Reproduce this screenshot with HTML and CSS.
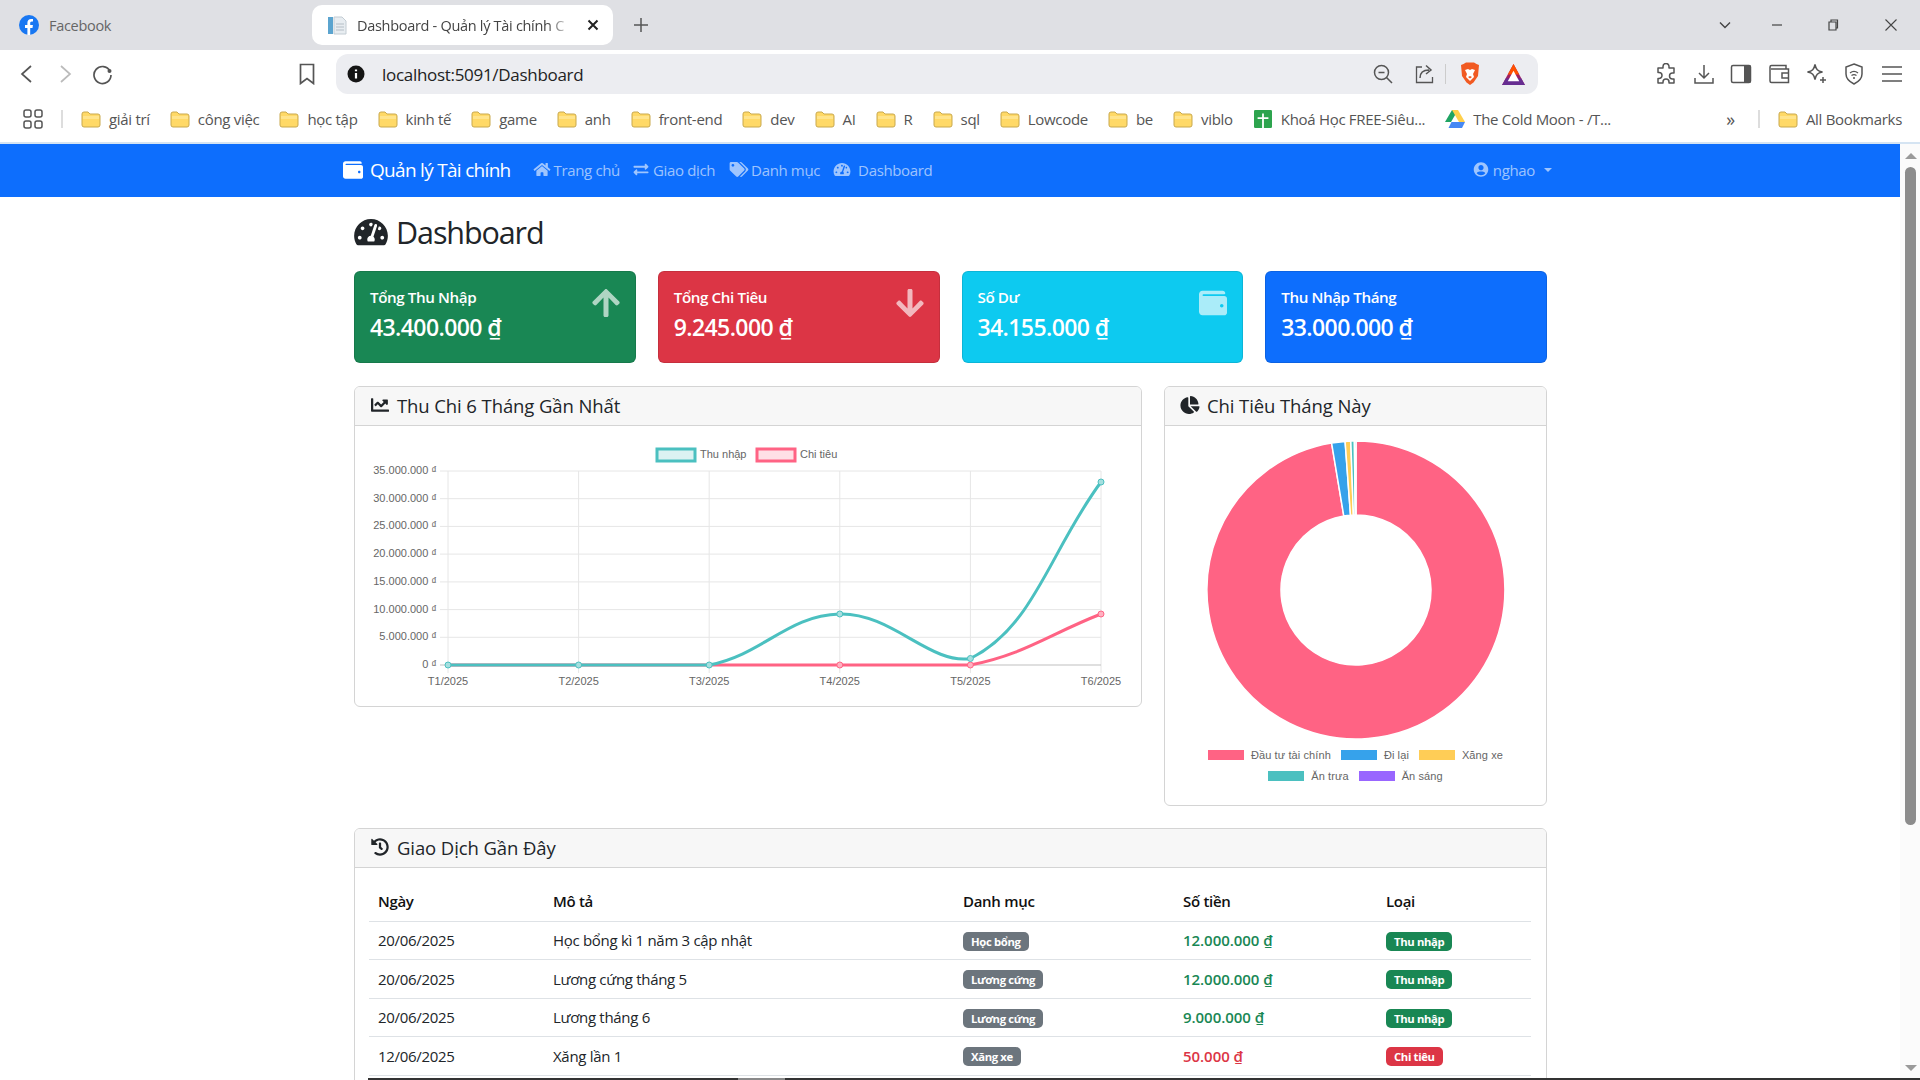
FILE: index.html
```html
<!DOCTYPE html>
<html lang="vi">
<head>
  <meta charset="UTF-8">
  <title>Dashboard - Quản lý Tài chính</title>
  <link rel="stylesheet" href="styles.css">
</head>
<body>

  <svg class="defs" width="0" height="0">
    <symbol id="i-gauge" viewBox="0 0 576 512"><path d="M288 32C128.94 32 0 160.94 0 320c0 52.8 14.25 102.26 39.06 144.8 5.61 9.62 16.3 15.2 27.44 15.2h443c11.14 0 21.83-5.58 27.44-15.2C561.75 422.26 576 372.8 576 320c0-159.06-128.94-288-288-288zm0 64c14.71 0 26.58 10.13 30.32 23.65-1.11 2.26-2.64 4.23-3.45 6.67l-9.22 27.67c-5.13 3.49-10.97 6.01-17.64 6.01-17.67 0-32-14.33-32-32S270.33 96 288 96zM96 384c-17.67 0-32-14.33-32-32s14.33-32 32-32 32 14.33 32 32-14.33 32-32 32zm48-160c-17.67 0-32-14.33-32-32s14.33-32 32-32 32 14.33 32 32-14.33 32-32 32zm246.77-72.41l-61.33 184C343.13 347.33 352 364.54 352 384c0 11.72-3.38 22.55-8.88 32H232.88c-5.5-9.45-8.88-20.28-8.88-32 0-33.94 26.5-61.43 59.9-63.59l61.34-184.01c4.17-12.56 17.73-19.45 30.36-15.17 12.57 4.19 19.35 17.79 15.17 30.36zm14.66 57.2l15.52-46.55c3.47-1.29 7.13-2.23 11.05-2.23 17.67 0 32 14.33 32 32s-14.33 32-32 32c-11.38-.01-20.89-6.28-26.57-15.22zM480 384c-17.67 0-32-14.33-32-32s14.33-32 32-32 32 14.33 32 32-14.33 32-32 32z"/></symbol>
    <symbol id="i-home" viewBox="0 0 576 512"><path d="M280.37 148.26L96 300.11V464a16 16 0 0 0 16 16l112.06-.29a16 16 0 0 0 15.92-16V368a16 16 0 0 1 16-16h64a16 16 0 0 1 16 16v95.64a16 16 0 0 0 16 16.05L464 480a16 16 0 0 0 16-16V300L295.67 148.26a12.19 12.19 0 0 0-15.3 0zM571.6 251.47L488 182.56V44.05a12 12 0 0 0-12-12h-56a12 12 0 0 0-12 12v72.61L318.47 43a48 48 0 0 0-61 0L4.34 251.47a12 12 0 0 0-1.6 16.9l25.5 31A12 12 0 0 0 45.15 301l235.22-193.74a12.19 12.19 0 0 1 15.3 0L530.9 301a12 12 0 0 0 16.9-1.6l25.5-31a12 12 0 0 0-1.7-16.93z"/></symbol>
    <symbol id="i-exchange" viewBox="0 0 512 512"><path d="M0 168v-16c0-13.255 10.745-24 24-24h360V80c0-21.367 25.899-32.042 40.971-16.971l80 80c9.372 9.373 9.372 24.569 0 33.941l-80 80C409.956 271.982 384 261.456 384 240v-48H24c-13.255 0-24-10.745-24-24zm488 152H128v-48c0-21.314-25.862-32.08-40.971-16.971l-80 80c-9.372 9.373-9.372 24.569 0 33.941l80 80C102.057 463.997 128 453.437 128 432v-48h360c13.255 0 24-10.745 24-24v-16c0-13.255-10.745-24-24-24z"/></symbol>
    <symbol id="i-tags" viewBox="0 0 640 512"><path d="M497.941 225.941L286.059 14.059A48 48 0 0 0 252.118 0H48C21.49 0 0 21.49 0 48v204.118a48 48 0 0 0 14.059 33.941l211.882 211.882c18.744 18.745 49.136 18.746 67.882 0l204.118-204.118c18.745-18.745 18.745-49.137 0-67.882zM112 160c-26.51 0-48-21.49-48-48s21.49-48 48-48 48 21.49 48 48-21.49 48-48 48zm513.941 133.823L421.823 497.941c-18.745 18.745-49.137 18.745-67.882 0l-.36-.36L527.64 323.522c16.999-16.999 26.36-39.6 26.36-63.64s-9.362-46.641-26.36-63.64L331.397 0h48.721a48 48 0 0 1 33.941 14.059l211.882 211.882c18.745 18.745 18.745 49.137 0 67.882z"/></symbol>
    <symbol id="i-wallet" viewBox="0 0 512 512"><path d="M461.2 128H80c-8.84 0-16-7.16-16-16s7.16-16 16-16h384c8.84 0 16-7.16 16-16 0-26.51-21.49-48-48-48H64C28.65 32 0 60.65 0 96v320c0 35.35 28.65 64 64 64h397.2c28.02 0 50.8-21.53 50.8-48V176c0-26.47-22.78-48-50.8-48zM416 336c-17.67 0-32-14.33-32-32s14.33-32 32-32 32 14.33 32 32-14.33 32-32 32z"/></symbol>
    <symbol id="i-up" viewBox="0 0 448 512"><path d="M34.9 289.5l-22.2-22.2c-9.4-9.4-9.4-24.6 0-33.9L207 39c9.4-9.4 24.6-9.4 33.9 0l194.3 194.3c9.4 9.4 9.4 24.6 0 33.9L413 289.4c-9.5 9.5-25 9.3-34.3-.4L264 168.6V456c0 13.3-10.7 24-24 24h-32c-13.3 0-24-10.7-24-24V168.6L69.2 289.1c-9.3 9.8-24.8 10-34.3.4z"/></symbol>
    <symbol id="i-down" viewBox="0 0 448 512"><path d="M413.1 222.5l22.2 22.2c9.4 9.4 9.4 24.6 0 33.9L241 473c-9.4 9.4-24.6 9.4-33.9 0L12.7 278.6c-9.4-9.4-9.4-24.6 0-33.9l22.2-22.2c9.5-9.5 25-9.3 34.3.4L184 343.4V56c0-13.3 10.7-24 24-24h32c13.3 0 24 10.7 24 24v287.4l114.8-120.5c9.3-9.8 24.8-10 34.3-.4z"/></symbol>
    <symbol id="i-line" viewBox="0 0 512 512"><path d="M496 384H64V80c0-8.84-7.16-16-16-16H16C7.16 64 0 71.16 0 80v336c0 17.67 14.33 32 32 32h464c8.84 0 16-7.16 16-16v-32c0-8.84-7.16-16-16-16zM464 96H345.94c-21.38 0-32.09 25.85-16.97 40.97l32.4 32.4L288 242.75l-73.37-73.37c-12.5-12.5-32.76-12.5-45.25 0l-68.69 68.69c-6.25 6.25-6.25 16.38 0 22.63l22.62 22.62c6.25 6.25 16.38 6.25 22.63 0L192 237.25l73.37 73.37c12.5 12.5 32.76 12.5 45.25 0l96-96 32.4 32.4c15.12 15.12 40.97 4.41 40.97-16.97V112c.01-8.84-7.15-16-15.99-16z"/></symbol>
    <symbol id="i-pie" viewBox="0 0 544 512"><path d="M527.79 288H290.5l158.03 158.03c6.04 6.04 15.98 6.53 22.19.68 38.7-36.46 65.32-85.61 73.13-140.86 1.34-9.46-6.51-17.85-16.06-17.85zm-15.83-64.8C503.72 103.74 408.26 8.28 288.8.04 279.68-.59 272 7.1 272 16.24V240h223.77c9.14 0 16.82-7.68 16.19-16.8zM224 288V50.71c0-9.55-8.39-17.4-17.84-16.06C86.99 51.49-4.1 155.6.14 280.37 4.5 408.51 114.83 513.59 243.03 511.98c50.4-.63 96.97-16.87 135.26-44.03 7.9-5.6 8.42-17.23 1.57-24.08L224 288z"/></symbol>
    <symbol id="i-history" viewBox="0 0 512 512"><path d="M504 255.531c.253 136.64-111.18 248.372-247.82 248.468-59.015.042-113.223-20.53-155.822-54.911-11.077-8.94-11.905-25.541-1.839-35.607l11.267-11.267c8.609-8.609 22.353-9.551 31.891-1.984C173.062 425.135 212.781 440 256 440c101.705 0 184-82.311 184-184 0-101.705-82.311-184-184-184-48.814 0-93.149 18.969-126.068 49.932l50.754 50.754c10.08 10.08 2.941 27.314-11.313 27.314H24c-8.837 0-16-7.163-16-16V38.627c0-14.254 17.234-21.393 27.314-11.314l49.372 49.372C129.209 34.136 189.552 8 256 8c136.81 0 247.747 110.78 248 247.531zm-180.912 78.784l9.823-12.63c8.138-10.463 6.253-25.542-4.21-33.679L288 256.349V152c0-13.255-10.745-24-24-24h-16c-13.255 0-24 10.745-24 24v135.651l65.409 50.874c10.463 8.137 25.541 6.253 33.679-4.21z"/></symbol>
    <symbol id="i-user" viewBox="0 0 496 512"><path d="M248 8C111 8 0 119 0 256s111 248 248 248 248-111 248-248S385 8 248 8zm0 96c48.6 0 88 39.4 88 88s-39.4 88-88 88-88-39.4-88-88 39.4-88 88-88zm0 344c-58.7 0-111.3-26.6-146.5-68.2 18.8-35.4 55.6-59.8 98.5-59.8 2.4 0 4.8.4 7.1 1.1 13 4.2 26.6 6.9 40.9 6.9 14.3 0 28-2.7 40.9-6.9 2.3-.7 4.7-1.1 7.1-1.1 42.9 0 79.7 24.4 98.5 59.8C359.3 421.4 306.7 448 248 448z"/></symbol>
    <symbol id="i-folder" viewBox="0 0 20 18">
      <path d="M1 4a2 2 0 0 1 2-2h4l2 2h8a2 2 0 0 1 2 2v9a2 2 0 0 1-2 2H3a2 2 0 0 1-2-2z" fill="#ffd967" stroke="#c9a94f" stroke-width="1"/>
      <path d="M2 6h16v3H2z" fill="#ffe48c"/>
    </symbol>
  </svg>

  <!-- thanh tab -->
  <div class="tabstrip">
    <div class="tab">
      <svg class="favicon" viewBox="0 0 20 20"><circle cx="10" cy="10" r="10" fill="#1877f2"/><path d="M8.4 20v-7H6v-3h2.4V7.8c0-2.5 1.5-3.9 3.7-3.9 1 0 1.9.2 1.9.2v2.5h-1.200c-1.200 0-1.600.8-1.600 1.500V10h2.700l-.4 3h-2.300v7z" fill="#fff"/></svg>
      <span>Facebook</span>
    </div>
    <div class="tab tab-active">
      <svg class="favicon" viewBox="0 0 20 20"><rect x="1" y="2" width="5" height="17" fill="#5ba4cf"/><path d="M7 2h8l4 4v13H7z" fill="#e8edf1" stroke="#c3ccd3"/><path d="M9 9h8M9 12h8M9 15h8" stroke="#b5bec6"/></svg>
      <span class="tab-title">Dashboard - Quản lý Tài chính C</span>
      <svg class="tab-close" viewBox="0 0 12 12"><path d="M1.500 1.500l9 9M10.500 1.500l-9 9" stroke="#222" stroke-width="2"/></svg>
    </div>
    <svg class="tab-new" viewBox="0 0 14 14"><path d="M7 0v14M0 7h14" stroke="#555" stroke-width="1.500"/></svg>
    <div class="window-btns">
      <svg viewBox="0 0 14 14"><path d="M2 4.500l5 5 5-5" fill="none" stroke="#444" stroke-width="1.400"/></svg>
      <svg viewBox="0 0 14 14"><path d="M2 7h10" stroke="#444" stroke-width="1.200"/></svg>
      <svg viewBox="0 0 14 14"><path d="M3 4h7v8H3zM5 4V2h6.500v8H10" fill="none" stroke="#444" stroke-width="1.200"/></svg>
      <svg viewBox="0 0 14 14"><path d="M1.500 1.500l11 11M12.500 1.500l-11 11" stroke="#444" stroke-width="1.100"/></svg>
    </div>
  </div>

  <!-- thanh dia chi -->
  <div class="toolbar">
    <svg class="tool back" viewBox="0 0 20 20"><path d="M14 2l-9 8 9 8" fill="none" stroke="#555" stroke-width="1.700"/></svg>
    <svg class="tool forward" viewBox="0 0 20 20"><path d="M6 2l9 8-9 8" fill="none" stroke="#bbb" stroke-width="1.700"/></svg>
    <svg class="tool reload" viewBox="0 0 22 22"><path d="M18 8a8.500 8.500 0 1 0 1 4" fill="none" stroke="#555" stroke-width="1.700"/><circle cx="17.500" cy="8" r="2" fill="#555"/></svg>
    <svg class="tool bookmark" viewBox="0 0 20 22"><path d="M3.500 1.500h13v19L10 15.500 3.500 20.500z" fill="none" stroke="#555" stroke-width="1.700"/></svg>
    <div class="address">
      <svg class="info" viewBox="0 0 18 18"><circle cx="9" cy="9" r="8.500" fill="#151515"/><path d="M9 8v5.500M9 4.500v1.800" stroke="#fff" stroke-width="2.200"/></svg>
      <span class="url">localhost:5091/Dashboard</span>
      <div class="address-icons">
        <svg class="ic-zoom" viewBox="0 0 20 20"><circle cx="8.500" cy="8.500" r="7" fill="none" stroke="#555" stroke-width="1.500"/><path d="M5.500 8.500h6M13.500 13.500l5.500 5.500" stroke="#555" stroke-width="1.500"/></svg>
        <svg class="ic-share" viewBox="0 0 20 20"><path d="M7 3H1.500v15.500h16V13" fill="none" stroke="#555" stroke-width="1.300"/><path d="M5 14c0-6 4-8 9-8M11 1.500l5 4.500-5 4" fill="none" stroke="#555" stroke-width="1.500"/></svg>
        <i class="address-sep"></i>
        <svg class="ic-brave" viewBox="0 0 20 24"><path d="M3.500 2L6 .5h8L16.500 2 19 3l-1 11-4.500 6.500L10 23l-3.500-2.500L2 14 1 3z" fill="#f15a22"/><path d="M5 8l3-1 2 1 2-1 3 1-2 4 1 3-4 4-4-4 1-3z" fill="#fff"/><path d="M8 15l2 1.500 2-1.500-2-1z" fill="#f15a22"/></svg>
        <svg class="ic-bat" viewBox="0 0 24 22"><path d="M12 0l12 22H0z" fill="#9e1f63"/><path d="M12 0l6 11H6z" fill="#ff5000"/><path d="M0 22l4-7h16l4 7z" fill="#662d91"/><path d="M12 7l6 11H6z" fill="#fff"/></svg>
      </div>
    </div>
    <div class="toolbar-right">
      <svg viewBox="0 0 22 22"><path d="M8 3.500a3 3 0 0 1 6 0V5h5v5h-1.500a3 3 0 0 0 0 6H19v4h-5v-1a3 3 0 0 0-6 0v1H3v-4.500h1a3 3 0 0 0 0-6H3V5h5z" fill="none" stroke="#555" stroke-width="1.500" stroke-linejoin="round"/></svg>
      <svg viewBox="0 0 22 22"><path d="M11 2v13M6 10l5 5 5-5M2 15v5h18v-5" fill="none" stroke="#555" stroke-width="1.500"/></svg>
      <svg viewBox="0 0 22 22"><rect x="1.500" y="2.500" width="19" height="17" rx="1.500" fill="none" stroke="#555" stroke-width="1.500"/><rect x="14" y="2.500" width="6.500" height="17" fill="#555"/></svg>
      <svg viewBox="0 0 22 22"><path d="M18 6V2.500H3.500A1.500 1.500 0 0 0 2 4v14a1.500 1.500 0 0 0 1.500 1.500h17V6H3M20.500 10H14v5h6.500" fill="none" stroke="#555" stroke-width="1.500"/></svg>
      <svg viewBox="0 0 22 22"><path d="M10 1.500c1 5 2.500 6.500 7.500 7.500-5 1-6.500 2.500-7.500 7.500C9 11.500 7.500 10 2.500 9c5-1 6.500-2.500 7.500-7.500zM18 14v6M15 17h6" fill="none" stroke="#555" stroke-width="1.500"/></svg>
      <svg viewBox="0 0 22 22"><path d="M11 1l8 3v7c0 5-4 8-8 10-4-2-8-5-8-10V4z" fill="none" stroke="#555" stroke-width="1.500"/><path d="M7 10c2.500-2 5.500-2 8 0M8.500 12.500c1.500-1 3.500-1 5 0" fill="none" stroke="#555" stroke-width="1.300"/><circle cx="11" cy="15" r="1" fill="#555"/></svg>
      <svg viewBox="0 0 22 22"><path d="M1 4h20M1 11h20M1 18h20" stroke="#555" stroke-width="1.500"/></svg>
    </div>
  </div>

  <!-- thanh bookmark -->
  <div class="bookmarks">
    <svg class="apps" viewBox="0 0 20 20"><rect x="1" y="1" width="7" height="7" rx="2" fill="none" stroke="#555" stroke-width="1.500"/><rect x="12" y="1" width="7" height="7" rx="2" fill="none" stroke="#555" stroke-width="1.500"/><rect x="1" y="12" width="7" height="7" rx="2" fill="none" stroke="#555" stroke-width="1.500"/><rect x="12" y="12" width="7" height="7" rx="2" fill="none" stroke="#555" stroke-width="1.500"/></svg>
    <i class="bm-sep"></i>
    <div class="bm"><svg class="bm-icon"><use href="#i-folder"/></svg>giải trí</div>
    <div class="bm"><svg class="bm-icon"><use href="#i-folder"/></svg>công việc</div>
    <div class="bm"><svg class="bm-icon"><use href="#i-folder"/></svg>học tập</div>
    <div class="bm"><svg class="bm-icon"><use href="#i-folder"/></svg>kinh tế</div>
    <div class="bm"><svg class="bm-icon"><use href="#i-folder"/></svg>game</div>
    <div class="bm"><svg class="bm-icon"><use href="#i-folder"/></svg>anh</div>
    <div class="bm"><svg class="bm-icon"><use href="#i-folder"/></svg>front-end</div>
    <div class="bm"><svg class="bm-icon"><use href="#i-folder"/></svg>dev</div>
    <div class="bm"><svg class="bm-icon"><use href="#i-folder"/></svg>AI</div>
    <div class="bm"><svg class="bm-icon"><use href="#i-folder"/></svg>R</div>
    <div class="bm"><svg class="bm-icon"><use href="#i-folder"/></svg>sql</div>
    <div class="bm"><svg class="bm-icon"><use href="#i-folder"/></svg>Lowcode</div>
    <div class="bm"><svg class="bm-icon"><use href="#i-folder"/></svg>be</div>
    <div class="bm"><svg class="bm-icon"><use href="#i-folder"/></svg>viblo</div>
    <div class="bm"><svg class="bm-icon" viewBox="0 0 20 20"><rect width="20" height="20" rx="1.500" fill="#2da44e"/><path d="M10 4v16M4 9h12" stroke="#fff" stroke-width="2"/></svg>Khoá Học FREE-Siêu...</div>
    <div class="bm"><svg class="bm-icon" viewBox="0 0 20 18"><path d="M7 0h6l-7 12H0z" fill="#1fa463"/><path d="M7 0h6l7 12h-6z" fill="#ffd04b"/><path d="M3.500 18L6.500 12H20l-3 6z" fill="#4688f4"/></svg>The Cold Moon - /T...</div>
    <div class="bm-end">
      <span class="bm-more">»</span>
      <i class="bm-sep"></i>
      <div class="bm"><svg class="bm-icon"><use href="#i-folder"/></svg>All Bookmarks</div>
    </div>
  </div>

  <div class="viewport">
    <div class="page">
      <nav class="navbar">
        <a class="brand"><svg class="ic"><use href="#i-wallet"/></svg>Quản lý Tài chính</a>
        <a class="nav-link nl-home"><svg class="ic"><use href="#i-home"/></svg>Trang chủ</a>
        <a class="nav-link nl-trans"><svg class="ic"><use href="#i-exchange"/></svg>Giao dịch</a>
        <a class="nav-link nl-cat"><svg class="ic"><use href="#i-tags"/></svg>Danh mục</a>
        <a class="nav-link nl-dash"><svg class="ic"><use href="#i-gauge"/></svg>Dashboard</a>
        <a class="nav-link nav-user"><svg class="ic"><use href="#i-user"/></svg>nghao<i class="caret"></i></a>
      </nav>

      <main class="content">
        <h1><svg class="ic"><use href="#i-gauge"/></svg>Dashboard</h1>

        <div class="stats">
          <div class="stat bg-green">
            <div><div class="stat-label">Tổng Thu Nhập</div><div class="stat-value">43.400.000 ₫</div></div>
            <svg class="stat-icon"><use href="#i-up"/></svg>
          </div>
          <div class="stat bg-red">
            <div><div class="stat-label">Tổng Chi Tiêu</div><div class="stat-value">9.245.000 ₫</div></div>
            <svg class="stat-icon"><use href="#i-down"/></svg>
          </div>
          <div class="stat bg-cyan">
            <div><div class="stat-label">Số Dư</div><div class="stat-value">34.155.000 ₫</div></div>
            <svg class="stat-icon"><use href="#i-wallet"/></svg>
          </div>
          <div class="stat bg-blue">
            <div><div class="stat-label">Thu Nhập Tháng</div><div class="stat-value">33.000.000 ₫</div></div>
          </div>
        </div>

        <div class="charts">
          <section class="card card-line">
            <header class="card-head"><svg class="ic"><use href="#i-line"/></svg>Thu Chi 6 Tháng Gần Nhất</header>
            <svg class="line-chart" viewBox="355 425 786 280" width="786" height="280">
              <g class="grid">
                <path d="M440 470H1101M440 497.700H1101M440 525.400H1101M440 553.100H1101M440 580.900H1101M440 608.600H1101M440 636.300H1101"/>
                <path d="M448 470V672M578.600 470V672M709.200 470V672M839.800 470V672M970.400 470V672M1101 470V672"/>
                <path class="zero" d="M440 664H1101"/>
              </g>
              <g class="y-ticks">
                <text x="437" y="473">35.000.000 ₫</text>
                <text x="437" y="500.700">30.000.000 ₫</text>
                <text x="437" y="528.400">25.000.000 ₫</text>
                <text x="437" y="556.100">20.000.000 ₫</text>
                <text x="437" y="583.900">15.000.000 ₫</text>
                <text x="437" y="611.600">10.000.000 ₫</text>
                <text x="437" y="639.300">5.000.000 ₫</text>
                <text x="437" y="667">0 ₫</text>
              </g>
              <g class="x-ticks">
                <text x="448" y="684">T1/2025</text>
                <text x="578.600" y="684">T2/2025</text>
                <text x="709.200" y="684">T3/2025</text>
                <text x="839.800" y="684">T4/2025</text>
                <text x="970.400" y="684">T5/2025</text>
                <text x="1101" y="684">T6/2025</text>
              </g>
              <rect class="lg-teal" x="657" y="448" width="38" height="12"/>
              <text class="lg-text" x="700" y="457">Thu nhập</text>
              <rect class="lg-pink" x="757" y="448" width="38" height="12"/>
              <text class="lg-text" x="800" y="457">Chi tiêu</text>
              <!-- chi tieu -->
              <path class="serie pink" d="M448 664L970.400 664C1024.500 653.400 1048.800 633.400 1101 613"/>
              <g class="dots pink-dots">
                <circle cx="839.800" cy="664" r="3"/><circle cx="970.400" cy="664" r="3"/><circle cx="1101" cy="613" r="3"/>
              </g>
              <!-- thu nhap -->
              <path class="serie teal" d="M448 664L709.200 664C763.300 653.400 787.100 614.300 839.800 613C891.600 611.700 930.100 664 970.400 657.500C1034.600 625.100 1048.800 551.600 1101 481"/>
              <g class="dots teal-dots">
                <circle cx="448" cy="664" r="3"/><circle cx="578.600" cy="664" r="3"/><circle cx="709.200" cy="664" r="3"/><circle cx="839.800" cy="613" r="3"/><circle cx="970.400" cy="657.500" r="3"/><circle cx="1101" cy="481" r="3"/>
              </g>
            </svg>
          </section>

          <section class="card card-pie">
            <header class="card-head"><svg class="ic"><use href="#i-pie"/></svg>Chi Tiêu Tháng Này</header>
            <div class="pie-body">
              <svg class="donut" viewBox="-150 -150 300 300" width="300" height="300">
                <path fill="#ff6384" d="M0 -149A149 149 0 1 1 -24.400 -147L-12.200 -74A75 75 0 1 0 0 -75Z"/>
                <path fill="#36a2eb" d="M-24.400 -147A149 149 0 0 1 -10.900 -148.600L-5.500 -74.800A75 75 0 0 0 -12.200 -74Z"/>
                <path fill="#ffcd56" d="M-10.900 -148.600A149 149 0 0 1 -5.200 -148.900L-2.600 -75A75 75 0 0 0 -5.500 -74.800Z"/>
                <path fill="#4bc0c0" d="M-5.200 -148.900A149 149 0 0 1 -1.600 -149L-.8 -75A75 75 0 0 0 -2.600 -75Z"/>
                <path fill="#9966ff" d="M-1.600 -149A149 149 0 0 1 0 -149L0 -75A75 75 0 0 0 -.8 -75Z"/>
              </svg>
              <div class="pie-legend">
                <span class="lg-item"><i class="sw sw-pink"></i>Đầu tư tài chính</span>
                <span class="lg-item"><i class="sw sw-blue"></i>Đi lại</span>
                <span class="lg-item"><i class="sw sw-yellow"></i>Xăng xe</span>
                <span class="lg-item"><i class="sw sw-teal"></i>Ăn trưa</span>
                <span class="lg-item"><i class="sw sw-purple"></i>Ăn sáng</span>
              </div>
            </div>
          </section>
        </div>

        <section class="card card-table">
          <header class="card-head"><svg class="ic"><use href="#i-history"/></svg>Giao Dịch Gần Đây</header>
          <div class="table-wrap">
            <table>
              <thead>
                <tr><th class="c-date">Ngày</th><th class="c-desc">Mô tả</th><th class="c-cat">Danh mục</th><th class="c-amt">Số tiền</th><th>Loại</th></tr>
              </thead>
              <tbody>
                <tr><td>20/06/2025</td><td>Học bổng kì 1 năm 3 cập nhật</td><td><span class="badge bg-gray">Học bổng</span></td><td class="amt in">12.000.000 ₫</td><td><span class="badge bg-green">Thu nhập</span></td></tr>
                <tr><td>20/06/2025</td><td>Lương cứng tháng 5</td><td><span class="badge bg-gray">Lương cứng</span></td><td class="amt in">12.000.000 ₫</td><td><span class="badge bg-green">Thu nhập</span></td></tr>
                <tr><td>20/06/2025</td><td>Lương tháng 6</td><td><span class="badge bg-gray">Lương cứng</span></td><td class="amt in">9.000.000 ₫</td><td><span class="badge bg-green">Thu nhập</span></td></tr>
                <tr><td>12/06/2025</td><td>Xăng lần 1</td><td><span class="badge bg-gray">Xăng xe</span></td><td class="amt out">50.000 ₫</td><td><span class="badge bg-red">Chi tiêu</span></td></tr>
              </tbody>
            </table>
          </div>
        </section>
      </main>
    </div>

    <div class="scrollbar">
      <i class="sb-up"></i>
      <i class="sb-thumb"></i>
      <i class="sb-down"></i>
    </div>
  </div>

  <div class="taskbar-edge"></div>

</body>
</html>
```

FILE: styles.css
```css
* {
  box-sizing: border-box;
}

html, body {
  height: 100%;
}

body {
  margin: 0;
  height: 100vh;
  overflow: hidden;
  display: flex;
  flex-direction: column;
  font-family: "Open Sans", "Noto Sans", sans-serif;
  font-size: 15px;
  letter-spacing: -0.3px;
  color: #212529;
  background: #fff;
}

.defs {
  position: absolute;
}

.ic {
  fill: currentColor;
  flex: none;
}

/* ---- browser chrome ---- */
.tabstrip {
  height: 50px;
  flex: none;
  display: flex;
  align-items: center;
  background: #dfe0e4;
  padding-left: 19px;
  font-size: 14.5px;
}

.tab {
  width: 293px;
  height: 40px;
  display: flex;
  align-items: center;
  color: #666;
}

.favicon {
  width: 20px;
  height: 20px;
  margin-right: 10px;
  flex: none;
}

.tab-active {
  width: 301px;
  background: #fff;
  border-radius: 10px;
  padding-left: 15px;
  color: #444;
}

.tab-title {
  width: 216px;
  flex: none;
  white-space: nowrap;
  -webkit-mask-image: linear-gradient(to right, #000 88%, transparent);
  mask-image: linear-gradient(to right, #000 88%, transparent);
}

.tab-close {
  width: 12px;
  height: 12px;
  margin-left: 14px;
}

.tab-new {
  width: 14px;
  height: 14px;
  margin-left: 21px;
}

.window-btns {
  margin-left: auto;
  display: flex;
  padding-right: 22px;
}

.window-btns svg {
  width: 14px;
  height: 14px;
}

.window-btns svg:nth-child(2) { margin-left: 38px; }
.window-btns svg:nth-child(3) { margin-left: 42px; }
.window-btns svg:nth-child(4) { margin-left: 44px; }

.toolbar {
  height: 48px;
  flex: none;
  display: flex;
  align-items: center;
  background: #fff;
}

.tool {
  width: 20px;
  height: 20px;
  flex: none;
}

.back { margin-left: 17px; }
.forward { margin-left: 18px; }
.reload { margin-left: 17px; width: 22px; height: 22px; }
.bookmark { margin-left: 183px; height: 22px; }

.address {
  width: 1202px;
  height: 40px;
  margin-left: 19px;
  flex: none;
  display: flex;
  align-items: center;
  background: #ecedf1;
  border-radius: 12px;
  padding-left: 11px;
}

.info {
  width: 18px;
  height: 18px;
}

.url {
  margin-left: 17px;
  font-size: 17px;
  color: #222;
}

.address-icons {
  margin-left: auto;
  display: flex;
  align-items: center;
}

.ic-zoom { width: 20px; height: 20px; }
.ic-share { width: 20px; height: 20px; margin-left: 22px; }
.address-sep { width: 1px; height: 20px; background: #ccc; margin: 0 14px 0 10px; }
.ic-brave { width: 20px; height: 24px; }
.ic-bat { width: 23px; height: 21px; margin: 0 13px 0 22px; }

.toolbar-right {
  display: flex;
  margin-left: 117px;
  gap: 15.6px;
}

.toolbar-right svg {
  width: 22px;
  height: 22px;
}

.bookmarks {
  height: 46px;
  flex: none;
  display: flex;
  align-items: center;
  background: #fff;
  border-bottom: 2px solid #d5e4f2;
  padding-left: 23px;
  font-size: 15px;
  color: #555;
  padding-bottom: 2px;
}

.apps {
  width: 20px;
  height: 20px;
}

.bm-sep {
  width: 2px;
  height: 18px;
  background: #ddd;
  margin: 0 18px;
  flex: none;
}

.bm {
  display: flex;
  align-items: center;
  margin-right: 20px;
  white-space: nowrap;
}

.bm-icon {
  width: 20px;
  height: 18px;
  margin-right: 8px;
  flex: none;
}

.bm-end {
  margin-left: auto;
  display: flex;
  align-items: center;
}

.bm-end .bm {
  margin-right: 18px;
}

.bm-more {
  font-size: 18px;
  margin-right: 5px;
}

/* ---- page ---- */
.viewport {
  flex: 1;
  display: flex;
  min-height: 0;
}

.page {
  flex: 1;
  overflow: hidden;
}

.scrollbar {
  width: 20px;
  flex: none;
  position: relative;
  background: #fbfbfb;
}

.sb-up, .sb-down {
  position: absolute;
  left: 5px;
  width: 0;
  height: 0;
  border-left: 6px solid transparent;
  border-right: 6px solid transparent;
}

.sb-up {
  top: 9px;
  border-bottom: 6px solid #9a9a9a;
}

.sb-down {
  bottom: 9px;
  border-top: 6px solid #9a9a9a;
}

.sb-thumb {
  position: absolute;
  top: 23px;
  left: 5px;
  width: 11px;
  height: 658px;
  border-radius: 6px;
  background: #8c8c8c;
}

.navbar {
  height: 53px;
  display: flex;
  align-items: center;
  background: #0d6efd;
  padding: 0 348px 2px 343px;
  color: rgba(255, 255, 255, 0.6);
  font-size: 15px;
  letter-spacing: -0.35px;
}

.brand {
  display: flex;
  align-items: center;
  color: #fff;
  font-size: 19px;
  letter-spacing: -0.7px;
}

.brand .ic {
  width: 20px;
  height: 20px;
  margin-right: 7px;
}

.nav-link {
  display: flex;
  align-items: center;
}

.nav-link .ic {
  width: 20px;
  height: 15px;
  margin-right: 2px;
}

.nl-home { margin-left: 21px; }
.nl-trans { margin-left: 11px; }
.nl-cat { margin-left: 14px; }
.nl-dash { margin-left: 12px; }
.nl-dash .ic { margin-right: 6px; }

.nav-user {
  margin-left: auto;
}

.caret {
  width: 0;
  height: 0;
  margin-left: 9px;
  border-left: 4px solid transparent;
  border-right: 4px solid transparent;
  border-top: 4px solid currentColor;
}

.content {
  width: 1193px;
  margin-left: 354px;
}

h1 {
  display: flex;
  align-items: center;
  height: 38px;
  margin: 16px 0 20px;
  font-size: 30.5px;
  font-weight: 500;
  letter-spacing: -1.1px;
}

h1 .ic {
  width: 34px;
  height: 30px;
  margin-right: 8px;
}

.stats {
  display: grid;
  grid-template-columns: repeat(4, 1fr);
  gap: 22px;
}

.stat {
  height: 92px;
  padding: 15px;
  display: flex;
  justify-content: space-between;
  color: #fff;
  border-radius: 6px;
  border: 1px solid rgba(0, 0, 0, 0.1);
}

.stat-label {
  font-size: 15.2px;
  font-weight: 600;
  line-height: 20px;
  letter-spacing: -0.4px;
}

.stat-value {
  margin-top: 6px;
  font-size: 23px;
  font-weight: 600;
  line-height: 28px;
  letter-spacing: -0.6px;
}

.stat-icon {
  width: 28px;
  height: 32px;
  fill: #fff;
  opacity: 0.65;
  flex: none;
}

.bg-green { background: #198754; }
.bg-red { background: #dc3545; }
.bg-cyan { background: #0dcaf0; }
.bg-blue { background: #0d6efd; }
.bg-gray { background: #6c757d; }

.charts {
  display: flex;
  align-items: flex-start;
  gap: 22px;
  margin-top: 23px;
}

.card {
  border: 1px solid #d4d4d4;
  border-radius: 6px;
  background: #fff;
  overflow: hidden;
}

.card-head {
  height: 39px;
  display: flex;
  align-items: center;
  padding: 0 15px 2px;
  background: #f7f7f7;
  border-bottom: 1px solid #d4d4d4;
  font-size: 18.5px;
  font-weight: 500;
  letter-spacing: -0.1px;
}

.card-head .ic {
  width: 20px;
  height: 18px;
  margin-right: 7px;
}

.card-line {
  width: 788px;
  height: 321px;
}

.line-chart {
  display: block;
}

.grid path {
  fill: none;
  stroke: #e6e6e6;
  stroke-width: 1;
}

.grid .zero {
  stroke: #bfbfbf;
}

.line-chart text {
  font-family: "Liberation Sans", Arial, sans-serif;
  font-size: 11px;
  letter-spacing: 0;
  fill: #666;
}

.y-ticks text {
  text-anchor: end;
}

.x-ticks text {
  text-anchor: middle;
}

.lg-teal, .lg-pink {
  stroke-width: 3;
}

.lg-teal { fill: rgba(75, 192, 192, 0.2); stroke: #4bc0c0; }
.lg-pink { fill: rgba(255, 99, 132, 0.2); stroke: #ff6384; }

.serie {
  fill: none;
  stroke-width: 3;
}

.serie.teal { stroke: #4bc0c0; }
.serie.pink { stroke: #ff6384; }

.teal-dots circle { fill: #a5dfdf; stroke: #4bc0c0; }
.pink-dots circle { fill: #ffb1c1; stroke: #ff6384; }

.card-pie {
  width: 383px;
  height: 420px;
}

.pie-body {
  display: flex;
  flex-direction: column;
  align-items: center;
  padding-top: 14px;
}

.donut {
  display: block;
}

.donut path {
  stroke: #fff;
  stroke-width: 1.5;
}

.pie-legend {
  width: 320px;
  margin-top: 6px;
  display: flex;
  flex-wrap: wrap;
  justify-content: center;
  column-gap: 10px;
  row-gap: 4px;
  font-family: "Liberation Sans", Arial, sans-serif;
  font-size: 11px;
  letter-spacing: 0.1px;
  color: #666;
}

.lg-item {
  display: flex;
  align-items: center;
  height: 17px;
}

.sw {
  width: 36px;
  height: 10px;
  margin-right: 7px;
}

.sw-pink { background: #ff6384; }
.sw-blue { background: #36a2eb; }
.sw-yellow { background: #ffcd56; }
.sw-teal { background: #4bc0c0; }
.sw-purple { background: #9966ff; }

.card-table {
  margin-top: 22px;
}

.table-wrap {
  padding: 15px 15px 16px 14px;
}

table {
  width: 1162px;
  table-layout: fixed;
  border-collapse: collapse;
}

th {
  text-align: left;
  font-weight: 600;
  color: #111;
  height: 38px;
  padding: 0 9px 2px;
  border-bottom: 1px solid #dee2e6;
}

td {
  height: 38.5px;
  padding: 0 9px;
  border-bottom: 1px solid #dee2e6;
}

.c-date { width: 175px; }
.c-desc { width: 410px; }
.c-cat { width: 220px; }
.c-amt { width: 203px; }

.amt {
  font-weight: 600;
  letter-spacing: -0.05px;
}

.amt.in { color: #198754; }
.amt.out { color: #dc3545; }

.badge {
  display: inline-block;
  height: 19px;
  line-height: 19px;
  padding: 0 8px;
  border-radius: 5px;
  color: #fff;
  font-size: 11.3px;
  font-weight: 700;
  letter-spacing: -0.35px;
  vertical-align: middle;
}

.taskbar-edge {
  position: fixed;
  left: 368px;
  right: 0;
  bottom: 0;
  height: 2px;
  background: linear-gradient(to right, #333 370px, #8a8a8a 370px, #8a8a8a 417px, #333 417px);
}
```
